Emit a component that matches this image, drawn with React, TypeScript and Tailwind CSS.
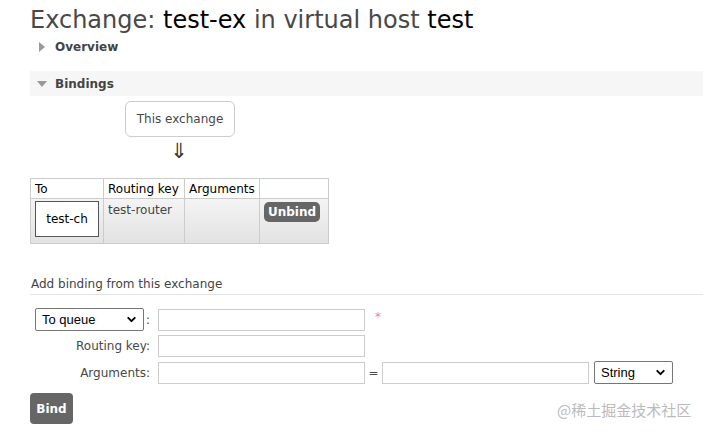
import { ChevronDown } from 'lucide-react'

const FONT = { fontFamily: '"DejaVu Sans", Verdana, sans-serif' }

function Select({ label, width }: { label: string; width: string }) {
  return (
    <div className={`${width} h-[23px] border border-[#767676] rounded-[2px] bg-white flex items-center justify-between pl-[6px] pr-[5px] text-[13px] text-black`}
      style={{ fontFamily: '"Liberation Sans", Arial, sans-serif' }}>
      <span>{label}</span>
      <ChevronDown size={13} strokeWidth={3.5} />
    </div>
  )
}

function Input({ width = 'w-[207px]' }: { width?: string }) {
  return <div className={`${width} h-[22px] border border-[#ccc] bg-white`} />
}

export default function App() {
  return (
    <div className="w-[703px] h-[433px] bg-white relative overflow-hidden text-[12px] text-[#484848]" style={FONT}>
      <h1 className="pl-[30px] pt-[4px] text-[24px] leading-[32px] text-[#484848] font-normal">
        Exchange: <span className="text-black">test-ex</span> in virtual host <span className="text-black">test</span>
      </h1>

      {/* Overview */}
      <div className="flex items-center pl-[39px] h-[22px]">
        <span className="w-0 h-0 border-y-[5px] border-y-transparent border-l-[6px] border-l-[#999]" />
        <span className="ml-[10px] font-bold text-[#444]">Overview</span>
      </div>

      {/* Bindings */}
      <div className="ml-[30px] mt-[13px] h-[25px] bg-[#f6f6f6] flex items-center pl-[7px]">
        <span className="w-0 h-0 border-x-[5px] border-x-transparent border-t-[6px] border-t-[#999]" />
        <span className="ml-[8px] font-bold text-[#444]">Bindings</span>
      </div>

      <div className="ml-[125px] mt-[5px] w-[110px] h-[36px] border border-[#ccc] rounded-[6px] flex items-center justify-center">
        This exchange
      </div>
      <div className="ml-[170px] mt-[2px] h-[24px] text-[21px] leading-[24px] text-[#333]">⇓</div>

      <table className="ml-[30px] mt-[15px] border-collapse text-[12px] text-black">
        <thead>
          <tr className="h-[20px]">
            <th className="w-[73px] border border-[#ccc] font-normal text-left px-[4px]">To</th>
            <th className="w-[81px] border border-[#ccc] font-normal text-left px-[4px]">Routing key</th>
            <th className="w-[75px] border border-[#ccc] font-normal text-left px-[4px]">Arguments</th>
            <th className="w-[69px] border border-[#ccc]" />
          </tr>
        </thead>
        <tbody>
          <tr className="h-[45px] bg-gradient-to-b from-[#f4f4f4] to-[#e2e2e2] align-top">
            <td className="border border-[#ccc] px-[4px] py-[2px]">
              <div className="w-[64px] h-[36px] bg-white border border-[#555] flex items-center justify-center">test-ch</div>
            </td>
            <td className="border border-[#ccc] px-[4px] py-[2px] text-[#444]">test-router</td>
            <td className="border border-[#ccc]" />
            <td className="border border-[#ccc] px-[4px] pt-[3px]">
              <div className="w-[56px] h-[20px] bg-[#666] rounded-[5px] text-white font-semibold flex items-center justify-center">Unbind</div>
            </td>
          </tr>
        </tbody>
      </table>

      <div className="ml-[30px] mt-[31px] border-b border-[#e4e4e4] pb-[1px] pl-[1px] text-[#444]">
        Add binding from this exchange
      </div>

      <div className="ml-[35px] mt-[13px] flex flex-col gap-[4px]">
        <div className="flex items-center">
          <Select label="To queue" width="w-[109px]" />
          <span className="ml-[2px] w-[12px]">:</span>
          <Input />
          <span className="ml-[10px] text-[#e88] self-start">*</span>
        </div>
        <div className="flex items-center">
          <span className="w-[123px] text-right pr-[8px]">Routing key:</span>
          <Input />
        </div>
        <div className="flex items-center">
          <span className="w-[123px] text-right pr-[8px]">Arguments:</span>
          <Input />
          <span className="w-[17px] text-center">=</span>
          <Input />
          <span className="ml-[5px]"><Select label="String" width="w-[79px]" /></span>
        </div>
      </div>

      <div className="ml-[30px] mt-[9px] w-[43px] h-[31px] bg-[#666] rounded-[4px] text-white font-bold flex items-center justify-center">
        Bind
      </div>

      <div className="absolute left-[557px] top-[399px] text-[15px] text-[#bbb]"
        style={{ fontFamily: '"Noto Sans CJK SC", sans-serif' }}>
        @稀土掘金技术社区
      </div>
    </div>
  )
}
